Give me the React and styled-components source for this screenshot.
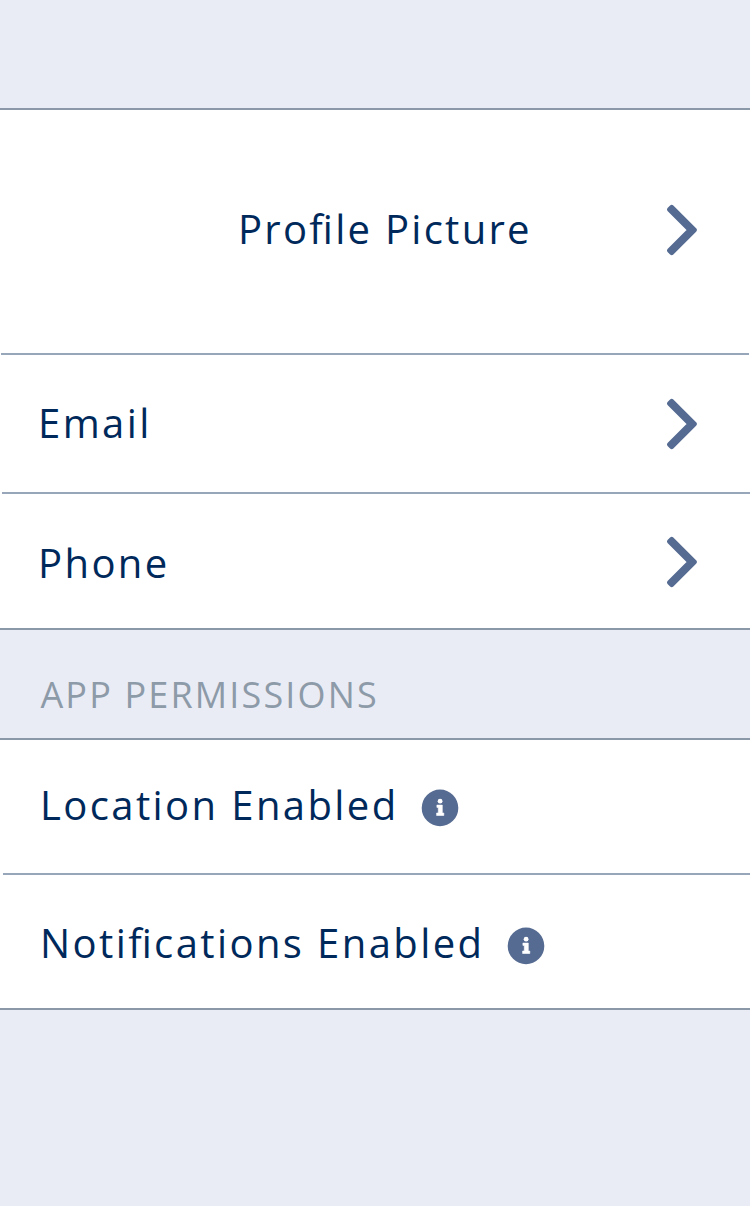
import React from 'react';
import styled, { createGlobalStyle } from 'styled-components';

const Global = createGlobalStyle`
  * { box-sizing: border-box; }
  body { margin: 0; background: #eaecf5; }
`;
const Screen = styled.main`
  width: 750px;
  height: 1206px;
  overflow: hidden;
  background: #eaecf5;
  font-family: 'Open Sans', sans-serif;
`;
const Spacer = styled.div`
  height: 108px;
`;
const Group = styled.section`
  background: #fff;
  border-top: 2px solid #8b98a7;
  border-bottom: 2px solid #8b98a7;
`;
const Row = styled.div`
  display: flex;
  align-items: flex-start;
  height: ${p => p.$height}px;
  padding: 0 53px 0 ${p => p.$left}px;
`;
const Divider = styled.div`
  height: 2px;
  margin-left: ${p => p.$left}px;
  margin-right: ${p => p.$right || 0}px;
  background: #98a6b9;
`;
const Label = styled.span`
  flex: ${p => (p.$grow ? 1 : 'none')};
  margin-top: ${p => p.$top}px;
  color: #00295b;
  font-size: 40px;
  line-height: 55px;
  letter-spacing: ${p => p.$tracking || 2.4}px;
  font-feature-settings: 'liga' 1;
  white-space: nowrap;
`;
const SectionHeader = styled.h2`
  margin: 0;
  height: 108px;
  padding: 40px 0 0 40.4px;
  color: #8d9aa8;
  font-size: 36px;
  font-weight: 400;
  line-height: 50px;
  letter-spacing: 2.16px;
`;
const Icon = styled.svg`
  display: block;
  flex: none;
  margin-top: ${p => p.$top}px;
  margin-left: ${p => p.$gap || 0}px;
`;

const Chevron = ({ top }) => (
  <Icon $top={top} width="30" height="52" viewBox="0 0 30 52">
    <path
      d="M4.7 3.2L27.5 26L4.7 48.8L2.4 46.5L22.9 26L2.4 5.5Z"
      fill="#566b92" stroke="#566b92" strokeWidth="4.6" strokeLinejoin="round"
    />
  </Icon>
);
const Info = ({ top, gap = 22 }) => (
  <Icon $gap={gap} $top={top} width="38" height="38" viewBox="0 0 38 38">
    <circle cx="19" cy="18.9" r="18.3" fill="#566b92" />
    <circle cx="19.1" cy="12.2" r="2.4" fill="#fff" />
    <path
      fill="#fff" stroke="#fff" strokeWidth=".6" strokeLinejoin="round"
      d="M15.9 16.1H21.3V24H22.8V26.5H15.6V24H17.3V18.4H15.9Z"
    />
  </Icon>
);

export default function App() {
  return (
    <Screen>
      <Global />
      <Spacer />
      <Group>
        <Row $height={243} $left={238}><Label $grow $top={91} $tracking={2.28}>Profile Picture</Label><Chevron top={94} /></Row>
        <Divider $left={1} $right={1} />
        <Row $height={137} $left={38}><Label $grow $top={40}>Email</Label><Chevron top={43} /></Row>
        <Divider $left={2} />
        <Row $height={134} $left={38}><Label $grow $top={41}>Phone</Label><Chevron top={42} /></Row>
      </Group>
      <SectionHeader>APP PERMISSIONS</SectionHeader>
      <Group>
        <Row $height={133} $left={40}><Label $top={37}>Location Enabled</Label><Info top={49} /></Row>
        <Divider $left={3} />
        <Row $height={133} $left={40}><Label $top={40}>Notifications Enabled</Label><Info top={52} gap={23} /></Row>
      </Group>
    </Screen>
  );
}
